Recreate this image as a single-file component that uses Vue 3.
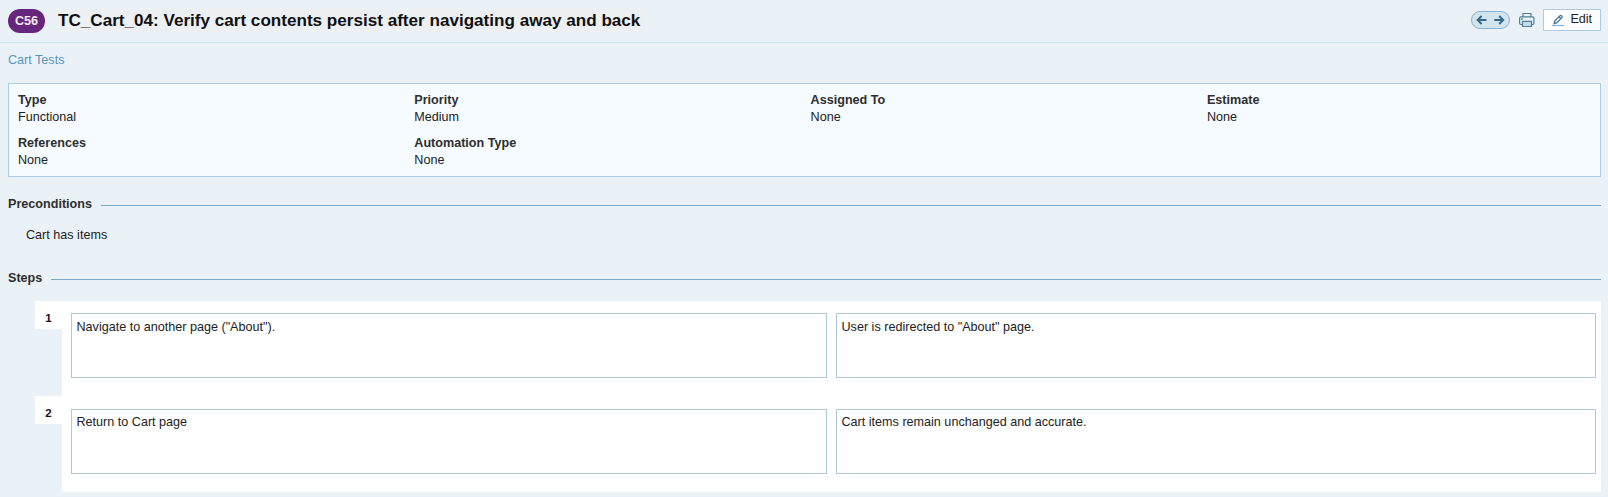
<script setup>
const fields = [
  { label: 'Type', value: 'Functional' },
  { label: 'Priority', value: 'Medium' },
  { label: 'Assigned To', value: 'None' },
  { label: 'Estimate', value: 'None' },
  { label: 'References', value: 'None' },
  { label: 'Automation Type', value: 'None' },
]

const steps = [
  { action: 'Navigate to another page ("About").', expected: 'User is redirected to "About" page.' },
  { action: 'Return to Cart page', expected: 'Cart items remain unchanged and accurate.' },
]
</script>

<template>
  <div class="page">
    <header class="header">
      <span class="badge">C56</span>
      <h1 class="title">TC_Cart_04: Verify cart contents persist after navigating away and back</h1>
      <div class="toolbar">
        <div class="pager">
          <svg width="37" height="16" viewBox="0 0 37 16" fill="none" stroke="#356787" stroke-width="1.9">
            <path d="M9.6 4 5.6 8l4 4M5.8 8h8.7" />
            <path d="M27.2 4 31.2 8l-4 4M31 8h-8.7" />
          </svg>
        </div>
        <svg class="printer" width="16" height="16" viewBox="0 0 16 16" fill="none" stroke="#527f9d" stroke-width="1.2">
          <path d="M4 5V1.500h8V5" />
          <path d="M3.500 12.500h-1.500Q.6 12.500.6 11.300V6.200q0-1.400 1.400-1.400h11.500q1.400 0 1.400 1.400v5.100q0 1.200-1.400 1.200h-1.500" />
          <path d="M3.500 9.300h9v5.200h-9z" fill="#c3dbea" />
          <path d="M2 7h1.800" stroke="#29a37a" stroke-width="1.600" />
        </svg>
        <button class="edit" type="button">
          <svg width="14" height="14" viewBox="0 0 14 14" fill="none">
            <path d="M3.200 10.500 3.800 7.900 9 2.700q.8-.7 1.500 0l.4.4q.7.700 0 1.500L5.700 9.800zM8 3.700l2 2" stroke="#4b7896" stroke-width="1.300" />
            <path d="M1 12.500h12" stroke="#7fb0cf" stroke-width="1.200" />
          </svg>
          <span>Edit</span>
        </button>
      </div>
    </header>

    <main class="content">
      <a class="crumb">Cart Tests</a>

      <dl class="fields">
        <div v-for="f in fields" :key="f.label">
          <dt>{{ f.label }}</dt>
          <dd>{{ f.value }}</dd>
        </div>
      </dl>

      <h2 class="section"><span>Preconditions</span></h2>
      <p class="precondition">Cart has items</p>

      <h2 class="section"><span>Steps</span></h2>
      <div class="steps">
        <div v-for="(s, i) in steps" :key="i" class="step">
          <div class="number">{{ i + 1 }}</div>
          <div class="panel">
            <div class="box">{{ s.action }}</div>
            <div class="box">{{ s.expected }}</div>
          </div>
        </div>
      </div>
    </main>
  </div>
</template>

<style>
html,
body {
  margin: 0;
  background: #eaf1f7;
}
</style>

<style scoped>
.page {
  box-sizing: border-box;
  height: 497px;
  overflow: hidden;
  background: #eaf1f7;
  color: #222;
  font: 12.6px/17px "Liberation Sans", Arial, sans-serif;
}
.header {
  box-sizing: border-box;
  display: flex;
  align-items: flex-start;
  height: 43px;
  padding: 9px 7px 0 8px;
  border-bottom: 1px solid #cde1ec;
}
.badge {
  width: 37px;
  height: 24px;
  border-radius: 12px;
  background: #66267c;
  color: #f3e9f6;
  font-size: 12.6px;
  font-weight: bold;
  line-height: 24px;
  text-align: center;
}
.title {
  margin: 0 0 0 8px;
  padding: 0 5px;
  height: 23px;
  background: #ecf0f3;
  color: #111;
  font-size: 17.1px;
  line-height: 23px;
  white-space: nowrap;
}
.toolbar {
  display: flex;
  margin-left: auto;
}
.pager {
  box-sizing: border-box;
  width: 39px;
  height: 18px;
  margin-top: 2px;
  border: 1px solid #86b4d0;
  border-radius: 9px;
  background: #d2e4ee;
}
.pager svg,
.printer,
.edit svg {
  display: block;
}
.printer {
  margin: 3px 8px 0 9px;
}
.edit {
  box-sizing: border-box;
  display: flex;
  width: 58px;
  height: 22px;
  margin: 0;
  padding: 3px 0 0 7px;
  border: 1px solid #aecbdd;
  background: #fff;
  color: #222;
  font: 12.6px/14px "Liberation Sans", Arial, sans-serif;
}
.edit span {
  margin: -1px 0 0 5.4px;
}
.content {
  padding: 9px 7px 0 8px;
}
.crumb {
  display: block;
  color: #5b96bd;
}
.fields {
  display: grid;
  grid-template-columns: repeat(4, 396.3px);
  row-gap: 9px;
  margin: 14px 0 0;
  padding: 8px 0 7px 9px;
  overflow: hidden;
  border: 1px solid #aecbdf;
  background: #f6fbff;
}
dt {
  color: #2e2e2e;
  font-weight: bold;
}
dd {
  margin: 0;
}
.section {
  display: flex;
  align-items: flex-start;
  height: 17px;
  margin: 19px 0 0;
  color: #2e2e2e;
  font-size: 12.6px;
  line-height: 17px;
}
.section::after {
  content: "";
  flex: 1;
  height: 1px;
  margin: 9px 0 0 9px;
  background: #7ba8c6;
}
.precondition {
  margin: 14px 0 0 18px;
}
.precondition + .section {
  margin-top: 26px;
}
.steps {
  margin: 13.8px 0 0 27px;
}
.step {
  display: flex;
  align-items: flex-start;
  height: 95.5px;
}
.number {
  width: 27px;
  height: 28px;
  background: #fff;
  color: #1c0f24;
  font-size: 11.5px;
  font-weight: bold;
  line-height: 34px;
  text-align: center;
}
.panel {
  box-sizing: border-box;
  flex: 1;
  display: grid;
  grid-template-columns: 756px 760px;
  column-gap: 9px;
  height: 95.5px;
  padding: 12.6px 0 0 9px;
  background: #fff;
}
.box {
  box-sizing: border-box;
  height: 64.8px;
  padding: 4.3px 4.5px;
  border: 1px solid #b0c9d8;
}
</style>
